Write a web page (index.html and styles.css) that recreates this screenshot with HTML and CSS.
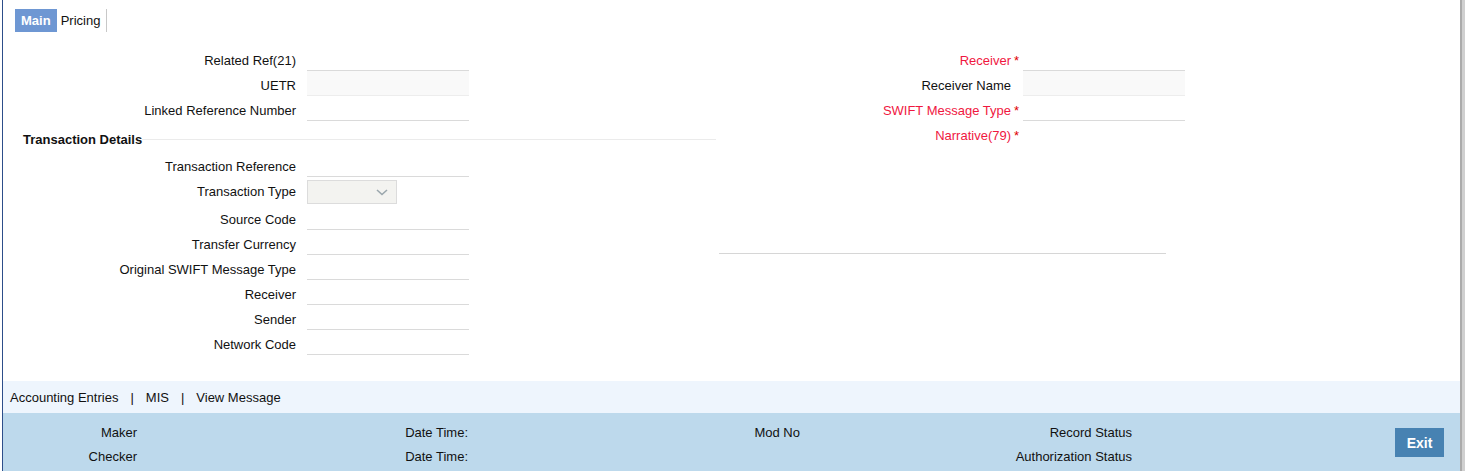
FILE: index.html
```html
<!DOCTYPE html>
<html lang="en">
<head>
  <meta charset="UTF-8"/>
  <title>Outgoing Message - Main</title>
  <link rel="stylesheet" href="styles.css">
</head>
<body>
  <div class="window">
    <div class="tabs">
      <span class="tab active">Main</span>
      <span class="tab">Pricing</span>
    </div>

    <div class="form">
      <div class="col col-left">
        <div class="row"><label>Related Ref(21)</label><span class="req"></span><input class="field" type="text"></div>
        <div class="row"><label>UETR</label><span class="req"></span><input class="field readonly" type="text" readonly></div>
        <div class="row"><label>Linked Reference Number</label><span class="req"></span><input class="field" type="text"></div>

        <div class="section-title"><span>Transaction Details</span></div>

        <div class="row"><label>Transaction Reference</label><span class="req"></span><input class="field" type="text"></div>
        <div class="row row-select">
          <label>Transaction Type</label><span class="req"></span>
          <div class="select">
            <svg width="12" height="7" viewBox="0 0 12 7"><path d="M1 1 L6 5.5 L11 1" fill="none" stroke="#9ba7ad" stroke-width="1.6"/></svg>
          </div>
        </div>
        <div class="row"><label>Source Code</label><span class="req"></span><input class="field" type="text"></div>
        <div class="row"><label>Transfer Currency</label><span class="req"></span><input class="field" type="text"></div>
        <div class="row"><label>Original SWIFT Message Type</label><span class="req"></span><input class="field" type="text"></div>
        <div class="row"><label>Receiver</label><span class="req"></span><input class="field" type="text"></div>
        <div class="row"><label>Sender</label><span class="req"></span><input class="field" type="text"></div>
        <div class="row"><label>Network Code</label><span class="req"></span><input class="field" type="text"></div>
      </div>

      <div class="col col-right">
        <div class="row"><label class="required">Receiver</label><span class="req">*</span><input class="field" type="text"></div>
        <div class="row"><label>Receiver Name</label><span class="req"></span><input class="field readonly" type="text" readonly></div>
        <div class="row"><label class="required">SWIFT Message Type</label><span class="req">*</span><input class="field" type="text"></div>
        <div class="row"><label class="required">Narrative(79)</label><span class="req">*</span><span></span></div>
        <div class="narrative-line"></div>
      </div>
    </div>

    <div class="links">
      <span>Accounting Entries</span><span class="sep">|</span><span>MIS</span><span class="sep">|</span><span>View Message</span>
    </div>

    <div class="audit">
      <div class="audit-grid">
        <span>Maker</span><span>Date Time:</span><span>Mod No</span><span>Record Status</span>
        <span>Checker</span><span>Date Time:</span><span></span><span>Authorization Status</span>
      </div>
      <button class="exit">Exit</button>
    </div>
  </div>
  <div class="scrollbar"></div>
</body>
</html>
```

FILE: styles.css
```css
* {
  box-sizing: border-box;
}

html, body {
  height: 100%;
}

body {
  margin: 0;
  padding-left: 2px;
  display: flex;
  font-family: 'Liberation Sans', Arial, sans-serif;
  font-size: 13px;
  color: #111;
  background: #fff;
}

.window {
  flex: 1;
  display: flex;
  flex-direction: column;
  border-left: 1px solid #2d4e8a;
}

.scrollbar {
  width: 5px;
  border-left: 2px solid #ababab;
  background: #d0d0d0;
}

/* Tabs */
.tabs {
  display: flex;
  padding: 9px 0 0 12px;
}

.tab {
  height: 23px;
  line-height: 23px;
  padding: 0 6px 0 4px;
  border-right: 1px solid #c8c8c8;
}

.tab.active {
  padding: 0 6px;
  border-right: none;
  background: #6e97d3;
  color: #fff;
  font-weight: bold;
}

/* Form */
.form {
  display: grid;
  grid-template-columns: 704px 1fr;
  margin-top: 14px;
  padding-left: 12px;
}

.row {
  display: grid;
  height: 25px;
  align-items: center;
}

.col-left .row {
  grid-template-columns: 281px 11px 162px;
}

.col-right .row {
  grid-template-columns: 292px 12px 162px;
}

.row label {
  text-align: right;
  padding-top: 3px;
}

.row label.required {
  color: #f0173f;
}

.req {
  color: #e00000;
  padding: 3px 0 0 3px;
}

.field {
  height: 25px;
  border: none;
  border-bottom: 1px solid #dadada;
  background: transparent;
  outline: none;
  font: inherit;
}

.field.readonly {
  background: #f9f9f9;
  border-bottom-color: #ededed;
}

.row-select {
  height: 28px;
}

.row-select label {
  padding-top: 1px;
}

.select {
  width: 90px;
  height: 24px;
  margin-top: 2px;
  border: 1px solid #dcdcdc;
  background: #f3f3f0;
  display: flex;
  align-items: center;
  justify-content: flex-end;
  padding-right: 8px;
}

.section-title {
  display: flex;
  align-items: center;
  height: 31px;
  padding: 6px 3px 0 8px;
  font-weight: bold;
}

.section-title::after {
  content: "";
  flex: 1;
  height: 1px;
  background: #ebebeb;
}

.narrative-line {
  width: 447px;
  height: 108px;
  border-bottom: 1px solid #d6d6d6;
}

/* Bottom links */
.links {
  margin-top: auto;
  height: 32px;
  line-height: 33px;
  padding-left: 7px;
  background: #eef5fd;
}

.links .sep {
  margin: 0 12px;
}

/* Audit footer */
.audit {
  display: flex;
  height: 58px;
  background: #bdd9ec;
}

.audit-grid {
  display: grid;
  grid-template-columns: 134px 331px 332px 332px;
  grid-auto-rows: 24px;
  align-items: center;
  padding-top: 7px;
}

.audit-grid span {
  text-align: right;
}

.exit {
  margin: 15px 0 0 263px;
  width: 49px;
  height: 29px;
  border: none;
  background: #4782b2;
  color: #fff;
  font-family: inherit;
  font-size: 14px;
  font-weight: bold;
  padding: 0;
}
```
